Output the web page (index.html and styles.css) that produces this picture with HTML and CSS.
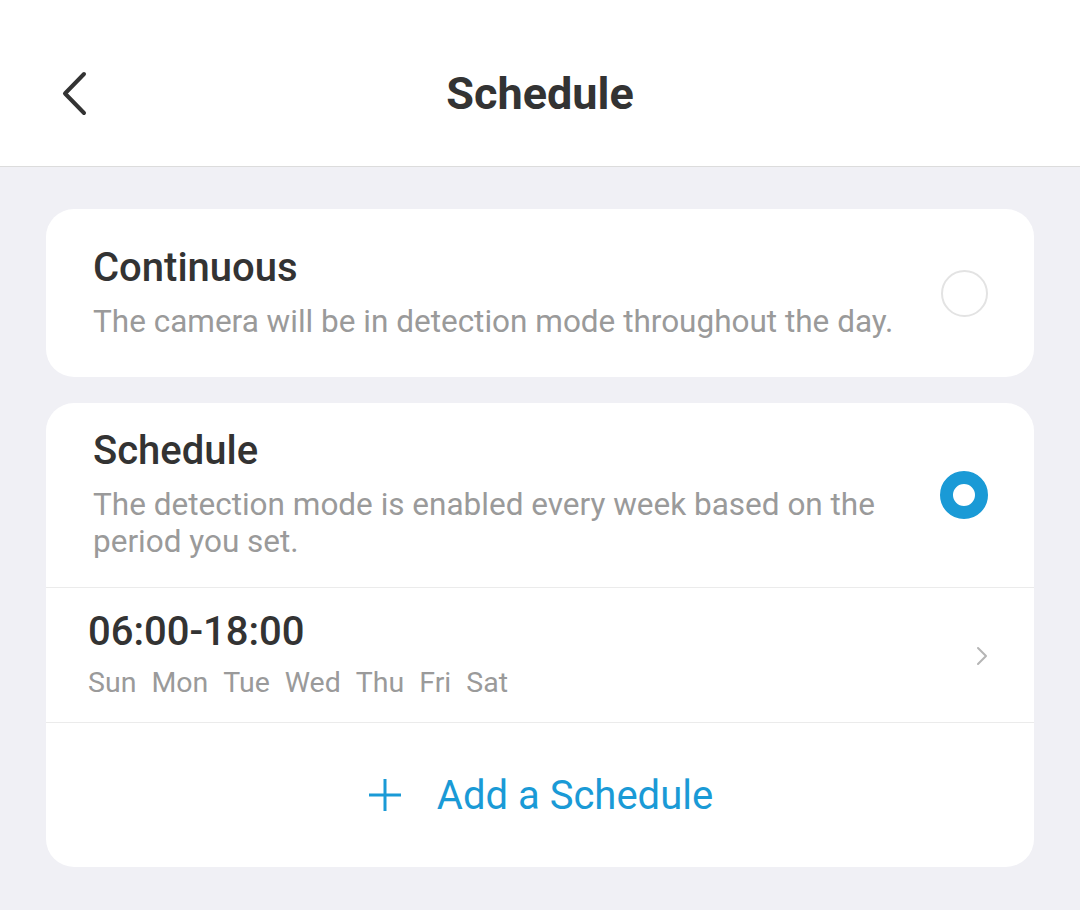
FILE: index.html
```html
<!DOCTYPE html>
<html lang="en">
<head>
    <meta charset="UTF-8">
    <meta name="viewport" content="width=device-width, initial-scale=1.0">
    <title>Schedule</title>
    <link rel="stylesheet" href="styles.css">
</head>
<body>

<div class="header">
    <button class="back-btn" aria-label="Back">
        <svg width="32" height="48" viewBox="0 0 32 48">
            <path d="M26 4 L7 23.5 L26 43" fill="none" stroke="#333" stroke-width="4" stroke-linecap="round" stroke-linejoin="round"/>
        </svg>
    </button>
    <h1>Schedule</h1>
</div>

<div class="content">
    <div class="card card-mode">
        <div class="mode-text">
            <h2>Continuous</h2>
            <p>The camera will be in detection mode throughout the day.</p>
        </div>
        <span class="radio"></span>
    </div>

    <div class="card">
        <div class="card-mode card-mode-top">
            <div class="mode-text">
                <h2>Schedule</h2>
                <p>The detection mode is enabled every week based on the period you set.</p>
            </div>
            <span class="radio checked"></span>
        </div>

        <div class="schedule-row">
            <div>
                <div class="time">06:00-18:00</div>
                <div class="days">
                    <span>Sun</span><span>Mon</span><span>Tue</span><span>Wed</span><span>Thu</span><span>Fri</span><span>Sat</span>
                </div>
            </div>
            <svg class="chevron" width="16" height="24" viewBox="0 0 16 24">
                <path d="M4 4 L12 12 L4 20" fill="none" stroke="#b5b5b5" stroke-width="2" stroke-linecap="round" stroke-linejoin="round"/>
            </svg>
        </div>

        <div class="add-row">
            <svg width="36" height="36" viewBox="0 0 36 36">
                <path d="M18 2 V34 M2 18 H34" stroke="#1a9ad6" stroke-width="3"/>
            </svg>
            <span>Add a Schedule</span>
        </div>
    </div>
</div>

</body>
</html>
```

FILE: styles.css
```css
body {
    margin: 0;
    font-family: Roboto, "Liberation Sans", sans-serif;
    background: #f0f0f5;
    color: #333;
    min-height: 910px;
}

.header {
    box-sizing: border-box;
    height: 167px;
    padding-top: 22px;
    background: #fff;
    border-bottom: 1px solid #dcdcdc;
    display: flex;
    align-items: center;
    justify-content: center;
    position: relative;
}

.header h1 {
    margin: 0;
    font-size: 45px;
    line-height: 52px;
    font-weight: 700;
    color: #333;
}

.back-btn {
    position: absolute;
    left: 58px;
    top: 70px;
    padding: 0;
    border: none;
    background: none;
    cursor: pointer;
}

.content {
    padding: 42px 46px;
    display: flex;
    flex-direction: column;
    gap: 26px;
}

.card {
    background: #fff;
    border-radius: 28px;
    overflow: hidden;
}

.card-mode {
    display: flex;
    align-items: center;
    padding: 37px 46px 37px 47px;
}

.card-mode-top {
    padding: 26px 46px 27px 47px;
    border-bottom: 1px solid #ebebeb;
}

.mode-text {
    flex: 1;
    padding-right: 40px;
}

.mode-text h2 {
    margin: 0 0 13px;
    font-size: 40px;
    line-height: 44px;
    font-weight: 500;
    color: #333;
}

.mode-text p {
    margin: 0;
    font-size: 31.5px;
    line-height: 37px;
    color: #9a9a9a;
}

.radio {
    width: 43px;
    height: 43px;
    border: 2px solid #e3e3e3;
    border-radius: 50%;
    flex-shrink: 0;
}

.radio.checked {
    width: 22px;
    height: 22px;
    border: 13px solid #1a9ad6;
}

.schedule-row {
    display: flex;
    align-items: center;
    justify-content: space-between;
    padding: 22px 44px 21px 42px;
    border-bottom: 1px solid #ebebeb;
}

.time {
    font-size: 40px;
    line-height: 44px;
    font-weight: 500;
    color: #333;
    margin-bottom: 11px;
}

.days {
    font-size: 28.5px;
    line-height: 36px;
    color: #9a9a9a;
}

.days span {
    margin-right: 15px;
}

.add-row {
    height: 144px;
    display: flex;
    align-items: center;
    justify-content: center;
    gap: 34px;
    color: #1a9ad6;
    font-size: 40px;
}
```
